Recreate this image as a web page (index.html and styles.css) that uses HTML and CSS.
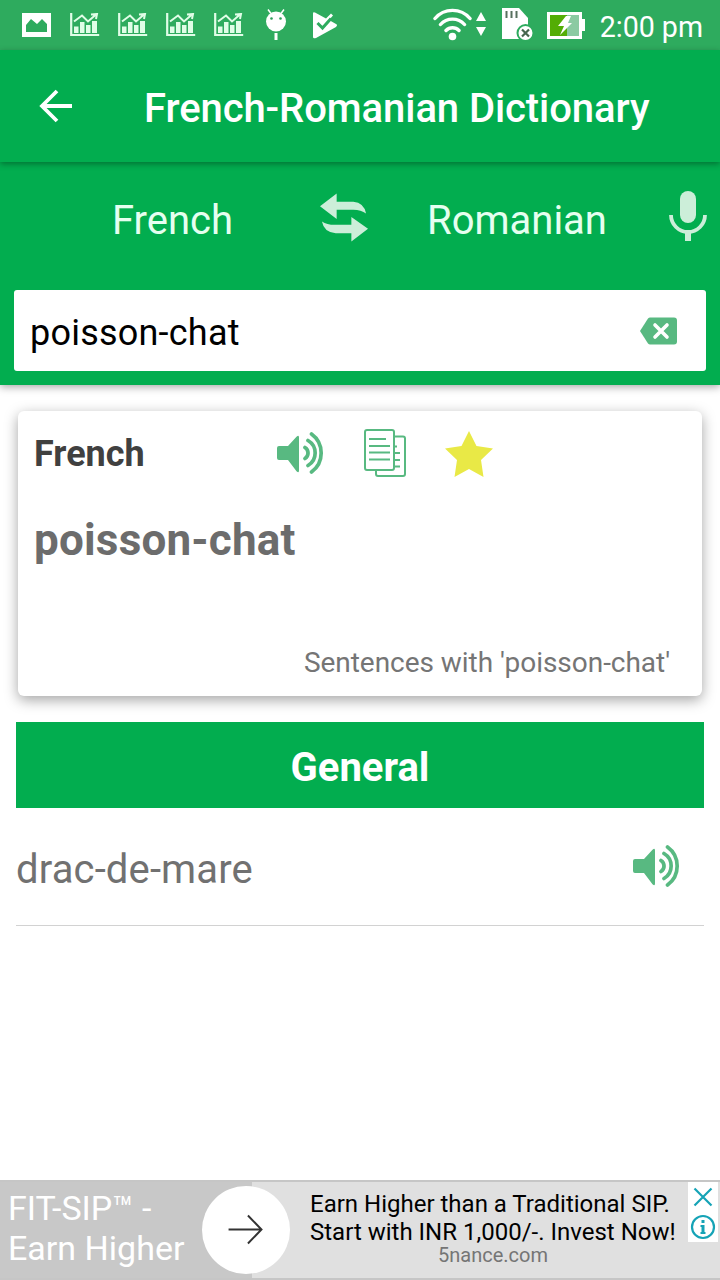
FILE: index.html
```html
<!DOCTYPE html>
<html lang="en">
<head>
    <meta charset="UTF-8">
    <title>French-Romanian Dictionary</title>
    <link rel="stylesheet" href="styles.css">
</head>
<body>
<!-- Shared icons -->
<svg class="icon-defs" width="0" height="0">
    <symbol id="chart" viewBox="0 0 30 24">
        <path d="M1.200 0v22h28" fill="none" stroke="currentColor" stroke-width="2.200"/>
        <path d="M4 13.500h4.500v6.500H4zM10 9h4.500v11H10zM16 12h4.500v8H16zM22 8h5v12h-5z" fill="currentColor"/>
        <path d="M4 8.500l8-6 6 6 8-7M21 1.500l6-.500-1 5" fill="none" stroke="currentColor" stroke-width="2"/>
    </symbol>
    <symbol id="speaker" viewBox="0 0 50 44">
        <path d="M3 14h9L20.500 4.800q2.500-2.300 2.500.700v33q0 3-2.500.700L12 28H3q-2 0-2-2V16q0-2 2-2z" fill="currentColor"/>
        <path d="M29 15.500a6.500 6.500 0 0 1 0 11M32 8.500a14.500 14.500 0 0 1 0 25M35.500 2a23.500 23.500 0 0 1 0 38" fill="none" stroke="currentColor" stroke-width="3.700" stroke-linecap="round"/>
    </symbol>
</svg>

<div class="status-bar">
    <div class="notifications">
        <svg class="photo" viewBox="0 0 30 24"><path d="M0 0h29v24H0zM4 19h21v-8l-5-5-5 5-6-5-5 6z" fill="#fff" fill-rule="evenodd"/></svg>
        <svg class="chart"><use href="#chart"/></svg>
        <svg class="chart"><use href="#chart"/></svg>
        <svg class="chart"><use href="#chart"/></svg>
        <svg class="chart"><use href="#chart"/></svg>
        <svg class="droid" viewBox="0 0 20 32">
            <circle cx="10" cy="12.500" r="10" fill="#fff"/>
            <path d="M2 .500l3 4M18 .500l-3 4" stroke="#fff" stroke-width="1.500"/>
            <path d="M10 24v7" stroke="#fff" stroke-width="3"/>
            <circle cx="5.500" cy="9.500" r="1.300" fill="#2d9e58"/>
            <circle cx="14.500" cy="9.500" r="1.300" fill="#2d9e58"/>
        </svg>
        <svg class="play" viewBox="0 0 26 27">
            <path d="M1 1.500q0-2 2-1L14 6.500l5-5 2 2-4 4.500 7 4q2 1 0 3L4 26q-3 1-3-1z" fill="#fff"/>
            <path d="M5.500 11l5 5 8.500-9.500" fill="none" stroke="#2eab5e" stroke-width="3"/>
        </svg>
    </div>
    <div class="system">
        <svg class="wifi" viewBox="0 0 54 34">
            <g fill="none" stroke="#fff" stroke-width="3.400" stroke-linecap="round">
                <path d="M2 10.500a23 23 0 0 1 35 0M7.500 16.500a16 16 0 0 1 24 0M13 22.500a9 9 0 0 1 13 0"/>
            </g>
            <circle cx="19.500" cy="28.500" r="3.800" fill="#fff"/>
            <path d="M43 13l5-9 5 9zM43 19h10l-5 9z" fill="#fff"/>
        </svg>
        <svg class="sd" viewBox="0 0 32 34">
            <path d="M0 0h17l9 10v21H0z" fill="#fff"/>
            <path d="M4.500 3v7M9.500 3v7M14.500 3v7" stroke="#58705f" stroke-width="2"/>
            <circle cx="23.500" cy="25" r="8" fill="#fff" stroke="#2eab5e" stroke-width="2"/>
            <path d="M20 21.500l7 7M27 21.500l-7 7" stroke="#47664f" stroke-width="2.200"/>
        </svg>
        <svg class="battery" viewBox="0 0 38 27">
            <path d="M0 0h35v27H0z" fill="#fff"/>
            <path d="M35 7h3v12h-3z" fill="#fff"/>
            <path d="M3 3h17v21H3z" fill="#53ad05"/>
            <path d="M20 3h12v21H20z" fill="#8bcaa2"/>
            <path d="M19 4h5l-3 7h4L13 23l4-9h-6z" fill="#fff"/>
        </svg>
        <span class="time">2:00 pm</span>
    </div>
</div>

<header class="app-bar">
    <svg class="back" viewBox="0 0 34 34"><path d="M33 17H3M18 2L3 17l15 15" fill="none" stroke="#fff" stroke-width="3.800"/></svg>
    <h1>French-Romanian Dictionary</h1>
</header>

<div class="search-panel">
    <div class="languages">
        <span class="lang-from">French</span>
        <svg class="swap" viewBox="0 0 50 50">
            <path d="M0 13L17 0v8.500h17q11 1 13 12-5-4-13-4H17V26zM49 36L32 49v-8.500H16q-12-1-14-12 5 3.500 13 3.500h17v-8z" fill="#cceed9"/>
        </svg>
        <span class="lang-to">Romanian</span>
        <svg class="mic" viewBox="0 0 38 52">
            <rect x="11" y="1" width="16" height="32" rx="8" fill="#cceed9"/>
            <path d="M2 25a17 17 0 0 0 34 0" fill="none" stroke="#cceed9" stroke-width="3.800"/>
            <path d="M19 42v9" stroke="#cceed9" stroke-width="6"/>
        </svg>
    </div>
    <div class="search-box">
        <span>poisson-chat</span>
        <svg class="clear" viewBox="0 0 37 28">
            <path d="M10 .500h24q3 0 3 3v21q0 3-3 3H10q-1 0-2-1L0 14 8 1.500q1-1 2-1z" fill="#58b981"/>
            <path d="M15 8l12 12M27 8L15 20" stroke="#fff" stroke-width="3.600" stroke-linecap="round"/>
        </svg>
    </div>
</div>

<section class="card">
    <div class="card-header">
        <h2>French</h2>
        <svg class="speaker"><use href="#speaker"/></svg>
        <svg class="copy" viewBox="0 0 42 48">
            <g fill="none" stroke="#58b981" stroke-width="2">
                <path d="M30 7.500h9q2 0 2 2V45q0 2-2 2H14q-2 0-2-2v-4"/>
                <rect x="1" y="1" width="29" height="40" rx="2"/>
                <path d="M5 10h17M5 17h21M5 23.500h21M5 30.500h21M31 17.500h2M31 24h5M31 31h5M31 37.500h5"/>
            </g>
        </svg>
        <svg class="star" viewBox="0 0 48 46"><path d="M24 0l7.500 15L48 17.500 36 29l2.500 17L24 38 9.500 46 12 29 0 17.500 16.500 15z" fill="#e9e946"/></svg>
    </div>
    <p class="word">poisson-chat</p>
    <p class="sentences">Sentences with 'poisson-chat'</p>
</section>

<section class="results">
    <h2>General</h2>
    <div class="result">
        <span>drac-de-mare</span>
        <svg class="speaker"><use href="#speaker"/></svg>
    </div>
</section>

<footer class="ad">
    <div class="ad-title">FIT-SIP™ -<br>Earn Higher</div>
    <div class="ad-body">
        <p>Earn Higher than a Traditional SIP.<br>Start with INR 1,000/-. Invest Now!</p>
        <span>5nance.com</span>
    </div>
    <div class="ad-arrow">
        <svg viewBox="0 0 36 32"><path d="M0 16h34M20 1.500L34 16 20 30.500" fill="none" stroke="#333" stroke-width="2"/></svg>
    </div>
    <div class="ad-controls">
        <svg viewBox="0 0 30 60">
            <g fill="none" stroke="#15a3b6" stroke-width="2.200">
                <path d="M6.500 6.500l17 17M23.500 6.500l-17 17"/>
                <circle cx="15" cy="45" r="11"/>
            </g>
            <path d="M13.500 38h3v3h-3zM12.500 43h4v8h-3v-6h-1z" fill="#15a3b6"/>
            <path d="M12.500 51h5" stroke="#15a3b6" stroke-width="2"/>
        </svg>
    </div>
</footer>
</body>
</html>
```
FILE: styles.css
```css
* {
    box-sizing: border-box;
}

body {
    margin: 0;
    width: 720px;
    height: 1280px;
    overflow: hidden;
    display: flex;
    flex-direction: column;
    background-color: #fff;
    font-family: Roboto, sans-serif;
}

h1, h2, p {
    margin: 0;
}

svg {
    display: block;
    flex-shrink: 0;
}

.icon-defs {
    position: absolute;
}

/* Status bar */
.status-bar {
    height: 50px;
    display: flex;
    justify-content: space-between;
    padding: 0 17px 0 22px;
    background-color: #2eab5e;
    color: #fff;
}

.notifications, .system {
    display: flex;
    align-items: center;
}

.photo {
    width: 30px;
    height: 24px;
    margin-right: 18px;
}

.chart {
    width: 30px;
    height: 24px;
    margin-right: 18px;
    color: #e0fde7;
}

.droid {
    width: 20px;
    height: 32px;
    margin: 0 26px 0 4px;
}

.play {
    width: 26px;
    height: 27px;
}

.wifi {
    width: 54px;
    height: 34px;
    margin-right: 15px;
}

.sd {
    width: 32px;
    height: 34px;
    margin-right: 13px;
}

.battery {
    width: 38px;
    height: 27px;
    margin-right: 15px;
}

.time {
    font-size: 28.600px;
    line-height: 50px;
    padding-top: 3px;
}

/* App bar */
.app-bar {
    position: relative;
    height: 112px;
    display: flex;
    align-items: center;
    padding-left: 39px;
    background-color: #02ad4f;
    box-shadow: 0 2px 6px rgba(0, 0, 0, 0.35);
    color: #fff;
    z-index: 1;
}

.back {
    width: 34px;
    height: 34px;
    margin-right: 71px;
}

.app-bar h1 {
    font-size: 40px;
    font-weight: 500;
    letter-spacing: -0.080px;
    line-height: 48px;
    padding-top: 6px;
    white-space: nowrap;
}

/* Language switch and search */
.search-panel {
    height: 223px;
    padding: 28px 14px 0;
    background-color: #02ad4f;
    box-shadow: 0 2px 8px rgba(0, 0, 0, 0.35);
}

.languages {
    height: 52px;
    display: flex;
    align-items: center;
    margin-right: -2px;
    color: #e5fff0;
    font-size: 40px;
}

.lang-from {
    width: 207px;
    padding-left: 98px;
    margin-right: 99px;
}

.lang-to {
    margin: 0 62px 0 58px;
}

.lang-from, .lang-to {
    padding-top: 10px;
    line-height: 48px;
}

.swap {
    width: 49px;
    height: 50px;
    margin-top: 4px;
}

.mic {
    width: 38px;
    height: 52px;
}

.search-box {
    height: 81px;
    margin-top: 48px;
    padding: 0 29px 0 16px;
    display: flex;
    align-items: center;
    justify-content: space-between;
    background-color: #fff;
    border-radius: 3px;
    font-size: 36px;
    letter-spacing: 0.220px;
}

.search-box span {
    padding-top: 4px;
}

.clear {
    width: 37px;
    height: 28px;
}

/* Word card */
.card {
    height: 285px;
    margin: 26px 18px 0;
    padding: 18px 16px 0;
    border-radius: 6px;
    background-color: #fff;
    box-shadow: 0 4px 14px rgba(0, 0, 0, 0.36);
}

.card-header {
    height: 50px;
    display: flex;
    align-items: center;
}

.card-header h2 {
    width: 242px;
    font-size: 36px;
    color: #404040;
}

.speaker {
    width: 50px;
    height: 44px;
    color: #58b981;
}

.copy {
    width: 42px;
    height: 48px;
    margin: 0 39px 2px 38px;
}

.star {
    width: 48px;
    height: 46px;
}

.word {
    margin-top: 35px;
    color: #6c6c6c;
    font-size: 44px;
    font-weight: bold;
    letter-spacing: 0.200px;
    line-height: 52px;
}

.sentences {
    margin: 80px 16px 0 0;
    color: #757575;
    font-size: 28px;
    letter-spacing: -0.040px;
    line-height: 34px;
    text-align: right;
}

/* Results */
.results {
    margin: 26px 16px 0;
}

.results h2 {
    height: 86px;
    padding-top: 2px;
    background-color: #02ad4f;
    color: #fff;
    font-size: 40px;
    line-height: 88px;
    text-align: center;
}

.result {
    height: 118px;
    padding-right: 22px;
    display: flex;
    align-items: center;
    justify-content: space-between;
    border-bottom: 1px solid #d2d2d2;
    color: #717171;
    font-size: 40px;
    letter-spacing: 0.150px;
}

.result span {
    padding-top: 6px;
}

/* Ad banner */
.ad {
    position: relative;
    height: 100px;
    margin-top: auto;
    display: flex;
    border-top: 2px solid #c6c6c6;
    border-bottom: 2px solid #c6c6c6;
    background-color: #e0e0e0;
}

.ad-title {
    width: 252px;
    padding: 6px 0 0 8px;
    background-color: #c8c8c8;
    color: #fff;
    font-size: 34px;
    line-height: 40px;
    white-space: nowrap;
}

.ad-body {
    width: 368px;
    margin-left: 58px;
    padding-top: 8px;
    font-size: 24px;
    line-height: 28px;
    white-space: nowrap;
}

.ad-body span {
    display: block;
    padding-right: 2px;
    color: #757575;
    font-size: 20px;
    line-height: 18px;
    text-align: center;
}

/* The round button overlaps the two halves of the banner */
.ad-arrow {
    position: absolute;
    left: 202px;
    top: 4px;
    width: 88px;
    height: 88px;
    display: flex;
    align-items: center;
    justify-content: center;
    border-radius: 50%;
    background-color: #fff;
}

.ad-arrow svg {
    width: 36px;
    height: 31px;
    margin-bottom: 2px;
}

.ad-controls {
    position: absolute;
    right: 2px;
    top: 0;
    background-color: #fff;
}

.ad-controls svg {
    width: 30px;
    height: 60px;
}
```
